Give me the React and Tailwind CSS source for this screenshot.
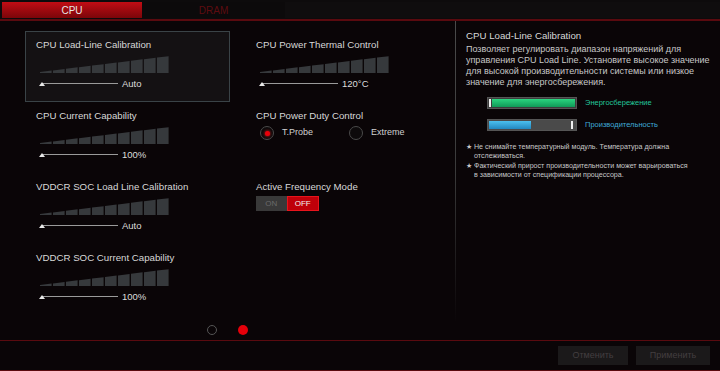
import React from "react";

function Bars() {
  const bars = [];
  for (let i = 0; i < 10; i++) {
    const x0 = i * 13;
    const x1 = x0 + 11.6;
    const h0 = 1 + (16 * x0) / 130;
    const h1 = 1 + (16 * x1) / 130;
    bars.push(
      <polygon key={i} points={`${x0},17 ${x0},${17 - h0} ${x1},${17 - h1} ${x1},17`} fill="#36393c" />
    );
  }
  return (
    <svg width="130" height="17" viewBox="0 0 130 17" className="block">
      {bars}
    </svg>
  );
}

function Setting({ label, value, card }) {
  return (
    <div
      className={`h-[71px] border pl-[10px] pt-[7px] ${card ? "border-[#3a4347] bg-[#141113]" : "border-transparent"}`}
    >
      <div className="text-[9.7px] leading-[12px] text-[#d8d8d8]">{label}</div>
      <div className="ml-[4px] mt-[5px]">
        <Bars />
      </div>
      <div className="mt-[5px] flex h-[12px] items-center">
        <svg width="82" height="12" viewBox="0 0 82 12" className="block">
          <line x1="6" y1="5.5" x2="82" y2="5.5" stroke="#9a9a9a" strokeWidth="1" />
          <polygon points="3,8 6,4 9,8" fill="#e8e8e8" />
        </svg>
        <span className="ml-[4px] text-[9.5px] text-[#dcdcdc]">{value}</span>
      </div>
    </div>
  );
}

function Radio({ on, label }) {
  return (
    <div className="flex items-center">
      <div className="flex h-[14px] w-[14px] items-center justify-center rounded-full border border-[#4a4a4a] bg-[#0d0a0b]">
        {on && <div className="h-[5px] w-[5px] rounded-full bg-[#e8000a] shadow-[0_0_3px_#ff2020]" />}
      </div>
      <span className="ml-[8px] text-[9px] text-[#d0d0d0]">{label}</span>
    </div>
  );
}

export default function App() {
  return (
    <div className="flex h-[371px] w-[720px] flex-col overflow-hidden bg-[#0a0507] font-['Liberation_Sans',_sans-serif]">
      {/* tabs */}
      <div className="flex h-[19px] bg-[#0d0b0c] pt-[2px]">
        <div className="ml-[2px] flex h-[16px] w-[140px] items-center justify-center bg-gradient-to-b from-[#c20d14] to-[#7c060a] text-[10px] text-[#e6e6e6]">
          CPU
        </div>
        <div className="flex h-[16px] w-[143px] items-center justify-center bg-[#0c0a0b] text-[10px] text-[#5e0c10]">
          DRAM
        </div>
        <div className="h-[16px] flex-1 bg-[#0f0d0e]" />
      </div>
      <div className="h-[2px] bg-[#5a0a0f]" />

      {/* body */}
      <div className="flex h-[319px]">
        <div className="flex w-[455px] flex-col pl-[25px] pt-[10px]">
          <div className="grid grid-cols-[205px_200px] gap-x-[15px]">
            <Setting card label="CPU Load-Line Calibration" value="Auto" />
            <Setting label="CPU Power Thermal Control" value="120°C" />
            <Setting label="CPU Current Capability" value="100%" />
            <div className="h-[71px] border border-transparent pl-[10px] pt-[7px]">
              <div className="text-[9.7px] leading-[12px] text-[#d8d8d8]">CPU Power Duty Control</div>
              <div className="mt-[4px] flex pl-[4px]">
                <div className="w-[89px]">
                  <Radio on label="T.Probe" />
                </div>
                <Radio label="Extreme" />
              </div>
            </div>
            <Setting label="VDDCR SOC Load Line Calibration" value="Auto" />
            <div className="h-[71px] border border-transparent pl-[10px] pt-[7px]">
              <div className="text-[9.7px] leading-[12px] text-[#d8d8d8]">Active Frequency Mode</div>
              <div className="mt-[3px] flex h-[15px] w-[63px] text-[8px]">
                <div className="flex flex-1 items-center justify-center bg-[#393939] text-[#6a6a6a]">ON</div>
                <div className="flex flex-1 items-center justify-center border border-[#e8141c] bg-[#bf0009] text-[#f0f0f0]">OFF</div>
              </div>
            </div>
            <Setting label="VDDCR SOC Current Capability" value="100%" />
            <div />
          </div>
          <div className="mt-[10px] flex items-center justify-center gap-[21px] pr-[25px]">
            <div className="h-[10px] w-[10px] rounded-full border border-[#555]" />
            <div className="h-[10px] w-[10px] rounded-full bg-[#e5000a]" />
          </div>
        </div>

        <div className="h-[302px] w-px bg-gradient-to-b from-[#4a4a4a] via-[#3a3a3a] to-transparent" />

        {/* help panel */}
        <div className="flex-1 pl-[10px] pt-[9px]">
          <div className="text-[9.7px] leading-[12px] text-[#d8d8d8]">CPU Load-Line Calibration</div>
          <div className="mt-[2px] whitespace-nowrap text-[9px] leading-[11px] text-[#c8c8c8]">
            Позволяет регулировать диапазон напряжений для
            <br />
            управления CPU Load Line. Установите высокое значение
            <br />
            для высокой производительности системы или низкое
            <br />
            значение для энергосбережения.
          </div>
          <div className="mt-[9px] flex items-center pl-[21px]">
            <div className="flex h-[12px] w-[90px] items-center border border-[#555] bg-[#3c3c3c] p-[1px]">
              <div className="mr-[1px] h-full w-[2px] bg-[#f0f0f0]" />
              <div className="h-full flex-1 bg-gradient-to-b from-[#2ad47f] to-[#0f9a58]" />
            </div>
            <span className="ml-[8px] text-[7.5px] text-[#22c59a]">Энергосбережение</span>
          </div>
          <div className="mt-[10px] flex items-center pl-[21px]">
            <div className="flex h-[12px] w-[90px] items-center border border-[#555] bg-[#4a4a4a] p-[1px]">
              <div className="h-full w-[42px] bg-gradient-to-b from-[#4cc0ee] to-[#2288c0]" />
              <div className="flex-1" />
              <div className="mr-[2px] h-full w-[2px] bg-[#f0f0f0]" />
            </div>
            <span className="ml-[8px] text-[7.5px] text-[#3eaad8]">Производительность</span>
          </div>
          <div className="mt-[12px] flex whitespace-nowrap text-[7.1px] leading-[8.7px] text-[#c8c8c8]">
            <span className="w-[8px] shrink-0">★</span>
            <span>
              Не снимайте температурный модуль. Температура должна
              <br />
              отслеживаться.
            </span>
          </div>
          <div className="mt-[2px] flex whitespace-nowrap text-[7.1px] leading-[8.7px] text-[#c8c8c8]">
            <span className="w-[8px] shrink-0">★</span>
            <span>
              Фактический прирост производительности может варьироваться
              <br />
              в зависимости от спецификации процессора.
            </span>
          </div>
        </div>
      </div>

      <div className="h-px bg-[#5a0a0f]" />
      {/* footer */}
      <div className="flex h-[29px] items-center justify-end gap-[8px] pr-[10px]">
        <div className="flex h-[19px] w-[70px] items-center justify-center bg-[#1b191a] text-[9px] text-[#433e40]">Отменить</div>
        <div className="flex h-[19px] w-[74px] items-center justify-center bg-[#1b191a] text-[9px] text-[#433e40]">Применить</div>
      </div>
      <div className="h-px bg-[#5a0a0f]" />
    </div>
  );
}
